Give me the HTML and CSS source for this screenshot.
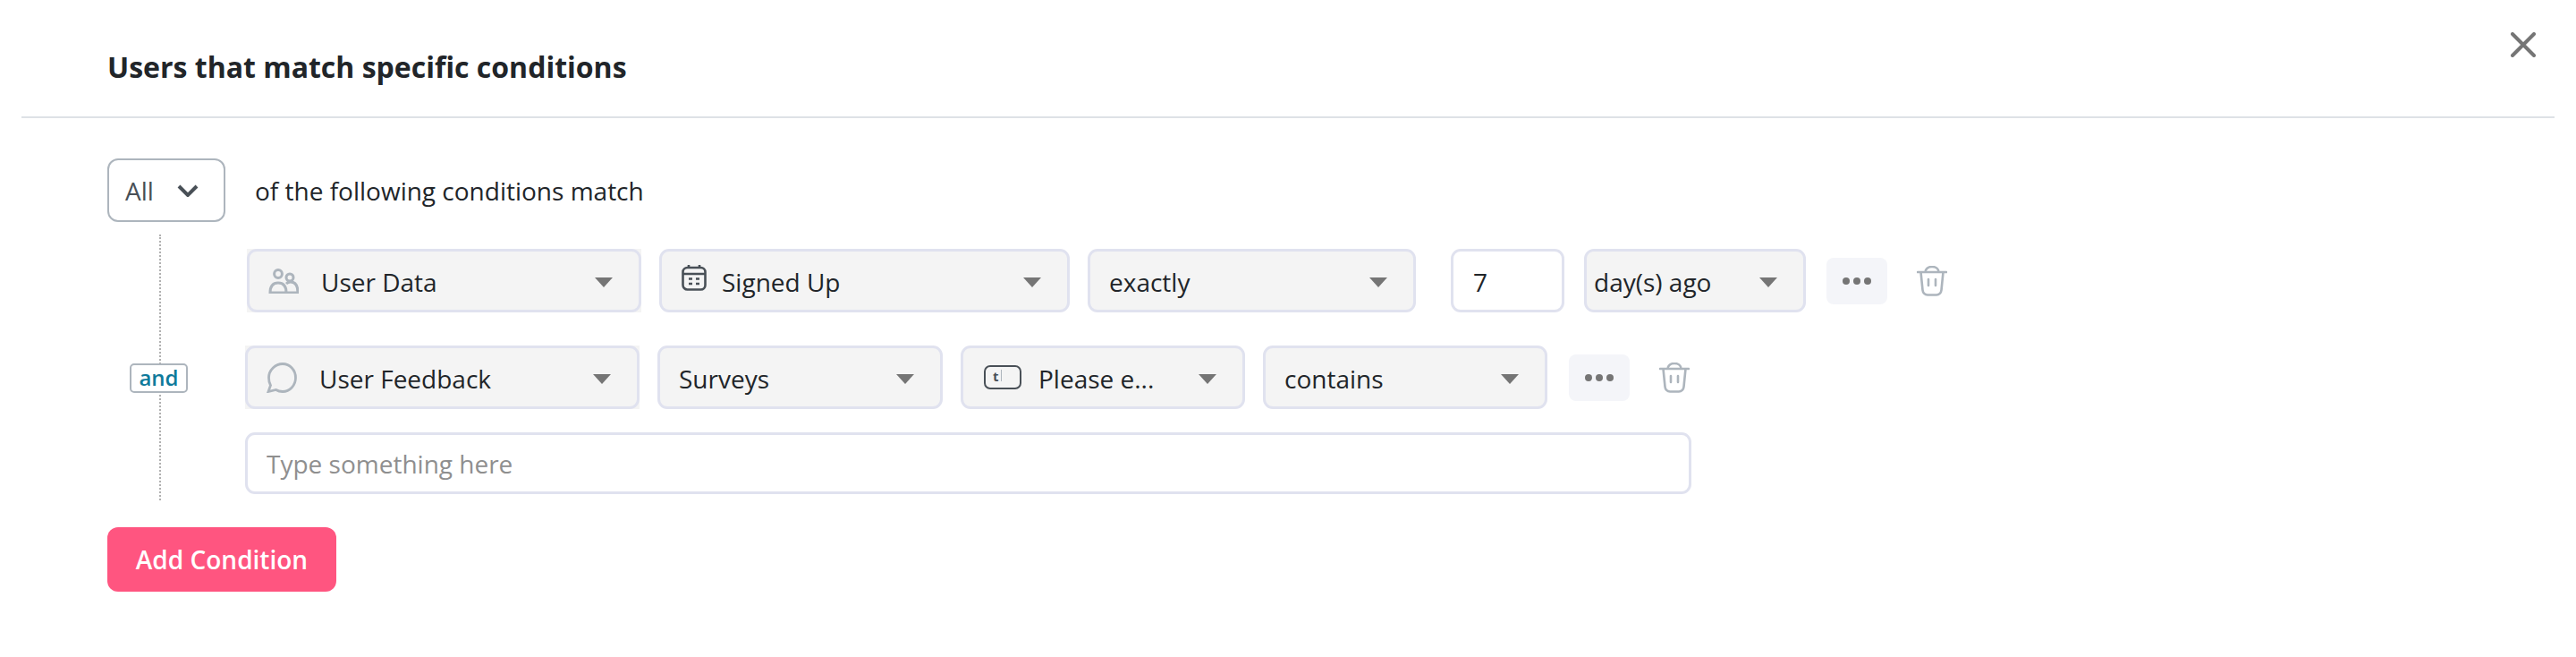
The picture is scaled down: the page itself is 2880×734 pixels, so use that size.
FILE: index.html
```html
<!DOCTYPE html>
<html lang="en">
<head>
    <meta charset="UTF-8">
    <title>Users that match specific conditions</title>
    <link rel="stylesheet" href="styles.css">
</head>
<body>
    <header class="modal-header">
        <h1>Users that match specific conditions</h1>
        <button class="close" aria-label="Close">
            <svg viewBox="0 0 28 28" width="28" height="28"><path d="M2 2 26 26M26 2 2 26" fill="none" stroke="#757575" stroke-width="4" stroke-linecap="round"/></svg>
        </button>
    </header>

    <main class="content">
        <div class="match-row">
            <div class="match-select">
                <span>All</span>
                <svg viewBox="0 0 24 14" width="24" height="14"><path d="M2 2 12 12 22 2" fill="none" stroke="#495057" stroke-width="4"/></svg>
            </div>
            <span>of the following conditions match</span>
        </div>

        <div class="conditions">
            <!-- Primeira condição -->
            <div class="condition first">
                <div class="select source w-441">
                    <svg class="icon" viewBox="0 0 34 28" width="34" height="28" fill="none" stroke="#adb5bd" stroke-width="3"><circle cx="11" cy="6" r="4.4"/><circle cx="24" cy="10" r="4"/><path d="M2 27c0-7 3-11 9-11s9 4 9 11zM20 17c1-1 3-2 5-2 5 0 8 4 8 12H17"/></svg>
                    <span class="label">User Data</span><i class="caret"></i>
                </div>
                <div class="select w-459">
                    <svg class="icon cal" viewBox="0 0 28 30" width="28" height="30" fill="none" stroke="#495057" stroke-width="2.6"><rect x="1.5" y="4" width="25" height="24.5" rx="5"/><path d="M1.5 11h25M8 1v4M20 1v4"/><path d="M8 16.5h4M16 16.5h4M8 22h4M16 22h4" stroke-width="2.4"/></svg>
                    <span class="label">Signed Up</span><i class="caret"></i>
                </div>
                <div class="select plain w-367"><span class="label">exactly</span><i class="caret"></i></div>
                <input class="number" type="text" value="7">
                <div class="select days w-248"><span class="label">day(s) ago</span><i class="caret"></i></div>
                <button class="more" aria-label="More"><i></i><i></i><i></i></button>
                <button class="trash" aria-label="Delete">
                    <svg viewBox="0 0 34 34" width="34" height="34" fill="none" stroke="#adb5bd" stroke-width="2.6" stroke-linecap="round"><path d="M1 7h32M4.500 7l2 20c.3 3 2.500 5.500 5.500 5.500h10c3 0 5.200-2.500 5.500-5.500l2-20M9.500 7c0-3.500 3-6 7.500-6s7.500 2.500 7.500 6M13 15v7M21 15v7"/></svg>
                </button>
            </div>

            <!-- Segunda condição -->
            <div class="condition second">
                <span class="and-tag">and</span>
                <div class="select source w-441">
                    <svg class="icon" viewBox="0 0 34 34" width="34" height="34" fill="none" stroke="#adb5bd" stroke-width="2.8"><path d="M18 1.500c8 0 14.500 7 14.500 15.500S26 32.500 18 32.500c-3 0-5.500-.8-7.500-2L2 32.500l2.500-7C3 23 2.500 20 2.500 17 2.500 8.500 10 1.500 18 1.500z"/></svg>
                    <span class="label">User Feedback</span><i class="caret"></i>
                </div>
                <div class="select plain w-319"><span class="label">Surveys</span><i class="caret"></i></div>
                <div class="select text-type w-318">
                    <span class="text-icon"><b>t</b></span>
                    <span class="label">Please e...</span><i class="caret"></i>
                </div>
                <div class="select plain w-318"><span class="label">contains</span><i class="caret"></i></div>
                <button class="more" aria-label="More"><i></i><i></i><i></i></button>
                <button class="trash" aria-label="Delete">
                    <svg viewBox="0 0 34 34" width="34" height="34" fill="none" stroke="#adb5bd" stroke-width="2.6" stroke-linecap="round"><path d="M1 7h32M4.500 7l2 20c.3 3 2.500 5.500 5.500 5.500h10c3 0 5.200-2.500 5.500-5.500l2-20M9.500 7c0-3.500 3-6 7.500-6s7.500 2.500 7.500 6M13 15v7M21 15v7"/></svg>
                </button>
            </div>

            <input class="value" type="text" placeholder="Type something here">
        </div>

        <button class="add-btn">Add Condition</button>
    </main>
</body>
</html>
```

FILE: styles.css
```css
* {
    box-sizing: border-box;
}

body {
    font-family: "Open Sans", sans-serif;
    font-size: 28px;
    color: #212529;
    margin: 0;
    padding: 0;
    background-color: #fff;
}

button {
    font-family: inherit;
    border: none;
    background: none;
    padding: 0;
}

.modal-header {
    display: flex;
    align-items: center;
    justify-content: space-between;
    height: 132px;
    margin: 0 24px;
    padding: 0 21px 0 96px;
    border-bottom: 2px solid #dee2e6;
}

.modal-header h1 {
    font-size: 32px;
    font-weight: 700;
    margin: 18px 0 0;
}

.close {
    display: flex;
    margin-bottom: 30px;
}

.content {
    padding-left: 120px;
}

.match-row {
    display: flex;
    align-items: center;
    gap: 33px;
    margin-top: 45px;
}

.match-select {
    display: flex;
    align-items: center;
    justify-content: space-between;
    width: 132px;
    height: 71px;
    padding: 0 28px 0 18px;
    border: 2px solid #adb5bd;
    border-radius: 12px;
    color: #495057;
}

.conditions {
    display: flex;
    flex-direction: column;
    align-items: flex-start;
    width: 1771px;
    margin: 14px 0 30px 58px;
    padding: 16px 0 7px 94px;
    border-left: 2px dotted #b0b0b0;
}

.condition {
    position: relative;
    display: flex;
    align-items: center;
    gap: 20px;
}

.condition.first {
    margin-left: 2px;
    margin-bottom: 37px;
}

.condition.second {
    margin-bottom: 26px;
}

.select {
    position: relative;
    display: flex;
    align-items: center;
    height: 71px;
    padding: 0 29px 0 22px;
    background-color: #f4f4f4;
    border: 3px solid #e0e2ef;
    border-radius: 11px;
}

.select.source {
    padding-left: 21px;
    border-color: transparent;
    border-radius: 0;
}

.select.source::after {
    content: "";
    position: absolute;
    inset: -3px;
    border: 3px solid #e0e2ef;
    border-radius: 11px;
}

.select.plain {
    padding-left: 21px;
}

.select.days {
    padding-left: 8px;
}

.select.text-type {
    padding-left: 23px;
}

.w-441 { width: 441px; }
.w-459 { width: 459px; }
.w-367 { width: 367px; }
.w-319 { width: 319px; }
.w-318 { width: 318px; }
.w-248 { width: 248px; }

.icon {
    flex: none;
    margin-right: 25px;
}

.icon.cal {
    margin-right: 17px;
    margin-top: -8px;
}

.label {
    flex: 1;
    padding-top: 2px;
    white-space: nowrap;
}

.caret {
    flex: none;
    width: 0;
    height: 0;
    margin-top: 3px;
    border-left: 10px solid transparent;
    border-right: 10px solid transparent;
    border-top: 11px solid #757575;
}

.text-icon {
    flex: none;
    width: 42px;
    height: 27px;
    margin-right: 19px;
    padding-left: 8px;
    border: 2.500px solid #495057;
    border-radius: 7px;
    font-size: 15px;
    line-height: 21px;
    color: #495057;
}

.text-icon b::after {
    content: "";
    display: inline-block;
    width: 1px;
    height: 13px;
    margin-left: 2px;
    background-color: #adb5bd;
}

.number {
    width: 127px;
    height: 71px;
    margin: 0 2px 0 19px;
    padding: 2px 22px 0;
    font: inherit;
    color: inherit;
    border: 3px solid #e0e2ef;
    border-radius: 11px;
    outline: none;
}

.more {
    display: flex;
    align-items: center;
    justify-content: center;
    gap: 4px;
    width: 68px;
    height: 52px;
    margin-left: 3px;
    background-color: #f4f5f9;
    border-radius: 8px;
}

.second .more {
    margin-left: 4px;
}

.more i {
    width: 8px;
    height: 8px;
    border-radius: 50%;
    background-color: #757575;
}

.trash {
    display: flex;
    margin-left: 13px;
}

.value {
    width: 1617px;
    height: 69px;
    padding: 0 21px;
    font: inherit;
    color: inherit;
    border: 3px solid #e0e2ef;
    border-radius: 11px;
    outline: none;
}

.value::placeholder {
    color: #8f8f8f;
    opacity: 1;
}

.and-tag {
    position: absolute;
    left: -129px;
    top: 20px;
    width: 65px;
    height: 33px;
    font-size: 24px;
    font-weight: 600;
    line-height: 28px;
    text-align: center;
    color: #0e7a9b;
    background-color: #fff;
    border: 2px solid #adb5bd;
    border-radius: 5px;
}

.add-btn {
    display: block;
    width: 256px;
    height: 72px;
    font-size: 28px;
    font-weight: 600;
    color: #fff;
    background-color: #ff5580;
    border-radius: 12px;
}
```
